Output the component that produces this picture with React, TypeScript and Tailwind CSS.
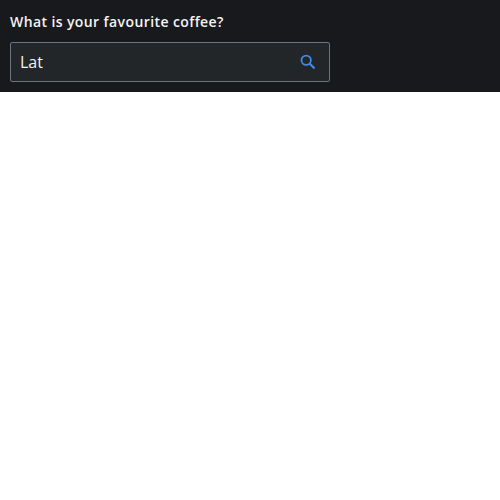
export default function App() {
  return (
    <div className="h-[500px] bg-white font-['Open_Sans',sans-serif]">
      <div className="h-[92px] bg-[#18191c] px-2.5 pt-2.5">
        <label className="block h-6 text-sm leading-6 font-semibold tracking-[0.4px] text-[#f3f3f5]" htmlFor="coffee">
          What is your favourite coffee?
        </label>
        <div className="mt-2 flex h-10 w-80 items-center rounded-[2px] border border-[#6b747e] bg-[#222629] pr-[11px] pl-[9px]">
          <input
            id="coffee"
            className="min-w-0 flex-1 bg-transparent text-base text-[#f3f3f5] outline-none"
            defaultValue="Lat"
          />
          <svg className="size-5 text-[#408be6]" viewBox="0 0 20 20" fill="none" stroke="currentColor">
            <circle cx="8.2" cy="8.2" r="4.7" strokeWidth="1.75" />
            <path d="M11.3 11.3 L16.6 16.6" strokeWidth="2.1" />
          </svg>
        </div>
      </div>
    </div>
  );
}
